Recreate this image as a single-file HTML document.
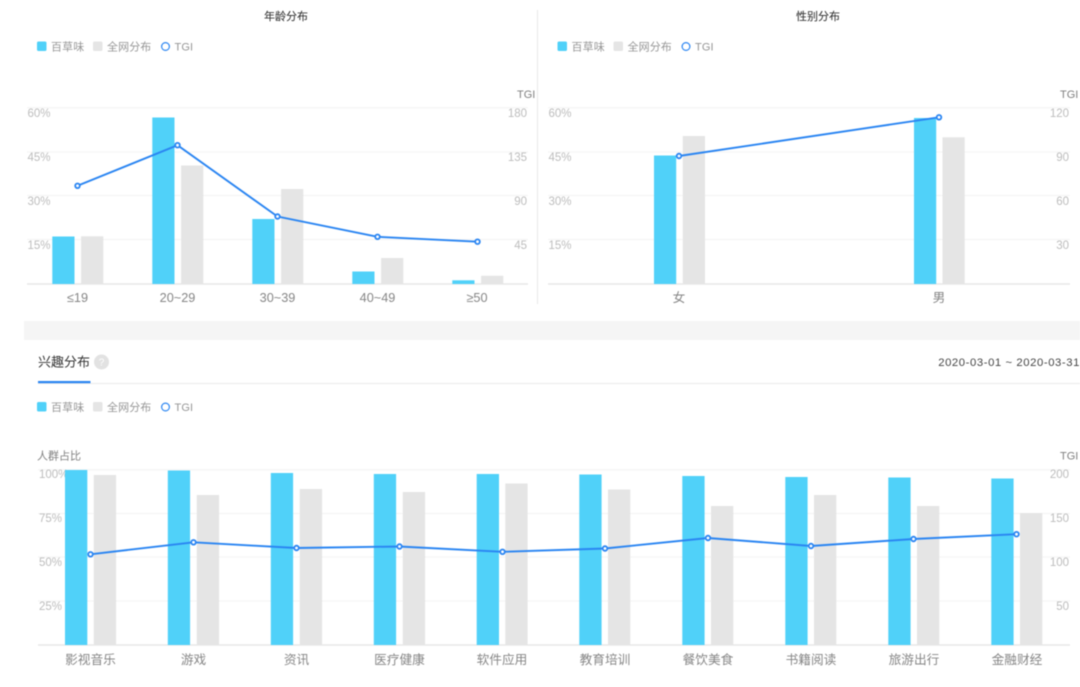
<!DOCTYPE html>
<html lang="zh">
<head>
<meta charset="utf-8">
<title>分布</title>
<style>
html,body{margin:0;padding:0;background:#fff;width:1080px;height:687px;overflow:hidden}
svg{display:block;filter:blur(0.4px)}
text{font-family:"Liberation Sans","Noto Sans CJK SC",sans-serif}
.t{font-size:11px;fill:#333;text-anchor:middle;stroke:#333;stroke-width:.08px}
.l{font-size:11px;fill:#969696;letter-spacing:.1px}
.a{font-size:11.5px;fill:#bdbdbd}
.r{font-size:11.5px;fill:#bdbdbd;text-anchor:end}
.g{font-size:11px;fill:#808080}
.x{font-size:12.7px;fill:#868686;text-anchor:middle}
.gr{stroke:#f3f3f3;stroke-width:1}
.b{stroke:#e4e4e4;stroke-width:1.3}
.bl{fill:#50d1f9}
.gy{fill:#e5e5e5}
.ln{fill:none;stroke:#2a85f2;stroke-width:1.9}
.pt{fill:#fff;stroke:#2a85f2;stroke-width:1.8}
</style>
</head>
<body>
<svg width="1080" height="687" viewBox="0 0 1080 687" xmlns="http://www.w3.org/2000/svg">
<rect width="1080" height="687" fill="#fff"/>

<!-- Age chart -->
<text class="t" x="286" y="20">年龄分布</text>
<rect class="bl" x="37" y="41.500" width="9.500" height="9.500" rx="1.500"/>
<text class="l" x="51" y="50.500">百草味</text>
<rect class="gy" x="93" y="41.500" width="9.500" height="9.500" rx="1.500"/>
<text class="l" x="107" y="50.500">全网分布</text>
<circle cx="165.500" cy="46.500" r="3.900" fill="#fff" stroke="#2a85f2" stroke-width="1.200"/>
<text class="l" x="174.500" y="50.500">TGI</text>
<text class="g" x="517" y="98">TGI</text>
<g class="gr">
<line x1="27" y1="107.800" x2="528" y2="107.800"/><line x1="27" y1="152" x2="528" y2="152"/><line x1="27" y1="195.500" x2="528" y2="195.500"/><line x1="27" y1="239.500" x2="528" y2="239.500"/>
</g>
<line class="b" x1="27" y1="284" x2="528" y2="284"/>
<text class="a" x="27.500" y="117">60%</text><text class="a" x="27.500" y="161">45%</text><text class="a" x="27.500" y="205">30%</text><text class="a" x="27.500" y="249">15%</text>
<text class="r" x="527" y="117">180</text><text class="r" x="527" y="161">135</text><text class="r" x="527" y="205">90</text><text class="r" x="527" y="249">45</text>
<g class="bl">
<rect x="52.300" y="236.500" width="22.200" height="47.500"/><rect x="152.300" y="117.500" width="22.200" height="166.500"/><rect x="252.300" y="219" width="22.200" height="65"/><rect x="352.300" y="271.500" width="22.200" height="12.500"/><rect x="452.300" y="280.300" width="22.200" height="3.700"/>
</g>
<g class="gy">
<rect x="81.100" y="236.300" width="22.200" height="47.700"/><rect x="181.100" y="165.500" width="22.200" height="118.500"/><rect x="281.100" y="189" width="22.200" height="95"/><rect x="381.100" y="258" width="22.200" height="26"/><rect x="481.100" y="275.800" width="22.200" height="8.200"/>
</g>
<polyline class="ln" points="77.500,185.800 177.500,145.200 277.500,216.500 377.500,236.800 477.500,241.700"/>
<g class="pt">
<circle cx="77.500" cy="185.800" r="2.300"/><circle cx="177.500" cy="145.200" r="2.300"/><circle cx="277.500" cy="216.500" r="2.300"/><circle cx="377.500" cy="236.800" r="2.300"/><circle cx="477.500" cy="241.700" r="2.300"/>
</g>
<text class="x" x="77.500" y="302">≤19</text><text class="x" x="177.500" y="302">20~29</text><text class="x" x="277.500" y="302">30~39</text><text class="x" x="377.500" y="302">40~49</text><text class="x" x="477" y="302">≥50</text>

<line x1="537.500" y1="10" x2="537.500" y2="304" stroke="#e8e8e8" stroke-width="1"/>

<!-- Gender chart -->
<text class="t" x="818" y="20">性别分布</text>
<rect class="bl" x="557.500" y="41.500" width="9.500" height="9.500" rx="1.500"/>
<text class="l" x="571.500" y="50.500">百草味</text>
<rect class="gy" x="613.500" y="41.500" width="9.500" height="9.500" rx="1.500"/>
<text class="l" x="627.500" y="50.500">全网分布</text>
<circle cx="686" cy="46.500" r="3.900" fill="#fff" stroke="#2a85f2" stroke-width="1.200"/>
<text class="l" x="695" y="50.500">TGI</text>
<text class="g" x="1060" y="98">TGI</text>
<g class="gr">
<line x1="548" y1="107.800" x2="1070" y2="107.800"/><line x1="548" y1="152" x2="1070" y2="152"/><line x1="548" y1="195.500" x2="1070" y2="195.500"/><line x1="548" y1="239.500" x2="1070" y2="239.500"/>
</g>
<line class="b" x1="548" y1="284" x2="1070" y2="284"/>
<text class="a" x="548.500" y="117">60%</text><text class="a" x="548.500" y="161">45%</text><text class="a" x="548.500" y="205">30%</text><text class="a" x="548.500" y="249">15%</text>
<text class="r" x="1069" y="117">120</text><text class="r" x="1069" y="161">90</text><text class="r" x="1069" y="205">60</text><text class="r" x="1069" y="249">30</text>
<rect class="bl" x="654" y="155.500" width="22.200" height="128.500"/><rect class="bl" x="914" y="118" width="22.200" height="166"/>
<rect class="gy" x="682.800" y="136" width="22.200" height="148"/><rect class="gy" x="942.500" y="137.300" width="22.200" height="146.700"/>
<polyline class="ln" points="679,156 939,117.300"/>
<g class="pt"><circle cx="679" cy="156" r="2.300"/><circle cx="939" cy="117.300" r="2.300"/></g>
<text class="x" x="679" y="302">女</text><text class="x" x="939" y="302">男</text>

<!-- Band -->
<rect x="24" y="321" width="1056" height="19" fill="#f5f5f5"/>

<!-- Interest header -->
<text x="38" y="366.500" font-size="13" fill="#333">兴趣分布</text>
<circle cx="101.500" cy="362" r="7.500" fill="#e2e2e2"/>
<text x="101.500" y="365.500" font-size="10" fill="#fff" text-anchor="middle">?</text>
<line x1="38" y1="383.500" x2="1080" y2="383.500" stroke="#eaeaea" stroke-width="1"/>
<rect x="38" y="381" width="52.500" height="2.200" fill="#2a85f2"/>
<text x="1080" y="366" font-size="11.300" fill="#444" text-anchor="end" letter-spacing=".58">2020-03-01 ~ 2020-03-31</text>

<!-- Interest chart -->
<rect class="bl" x="37" y="402" width="9.500" height="9.500" rx="1.500"/>
<text class="l" x="51" y="411">百草味</text>
<rect class="gy" x="93" y="402" width="9.500" height="9.500" rx="1.500"/>
<text class="l" x="107" y="411">全网分布</text>
<circle cx="165.500" cy="407" r="3.900" fill="#fff" stroke="#2a85f2" stroke-width="1.200"/>
<text class="l" x="174.500" y="411">TGI</text>
<text class="g" x="37" y="459.500">人群占比</text>
<text class="g" x="1060" y="459.500">TGI</text>
<g class="gr">
<line x1="38" y1="469.800" x2="1070" y2="469.800"/><line x1="38" y1="513.500" x2="1070" y2="513.500"/><line x1="38" y1="557" x2="1070" y2="557"/><line x1="38" y1="601" x2="1070" y2="601"/>
</g>
<line class="b" x1="38" y1="645" x2="1070" y2="645"/>
<text class="a" x="39" y="478">100%</text><text class="a" x="39" y="522">75%</text><text class="a" x="39" y="566">50%</text><text class="a" x="39" y="610">25%</text>
<text class="r" x="1069" y="478">200</text><text class="r" x="1069" y="522">150</text><text class="r" x="1069" y="566">100</text><text class="r" x="1069" y="610">50</text>
<g class="bl">
<rect x="65" y="470" width="22.300" height="175"/><rect x="167.800" y="470.500" width="22.300" height="174.500"/><rect x="270.800" y="473" width="22.300" height="172"/><rect x="373.800" y="474" width="22.300" height="171"/><rect x="476.700" y="474" width="22.300" height="171"/><rect x="579.300" y="474.500" width="22.300" height="170.500"/><rect x="682.300" y="476" width="22.300" height="169"/><rect x="785.300" y="477" width="22.300" height="168"/><rect x="888.300" y="477.500" width="22.300" height="167.500"/><rect x="991.300" y="478.500" width="22.300" height="166.500"/>
</g>
<g class="gy">
<rect x="93.800" y="475" width="22.300" height="170"/><rect x="196.800" y="495" width="22.300" height="150"/><rect x="299.800" y="489" width="22.300" height="156"/><rect x="402.800" y="492" width="22.300" height="153"/><rect x="505.300" y="483.500" width="22.300" height="161.500"/><rect x="608" y="489.500" width="22.300" height="155.500"/><rect x="711" y="506" width="22.300" height="139"/><rect x="814" y="495" width="22.300" height="150"/><rect x="917" y="506" width="22.300" height="139"/><rect x="1020" y="513" width="22.300" height="132"/>
</g>
<polyline class="ln" points="90.500,554.300 193.500,542.300 296.500,548 399.500,546.500 502.500,551.800 605,548.500 708,538 811,546 913.500,539 1016.500,534.200"/>
<g class="pt">
<circle cx="90.500" cy="554.300" r="2.300"/><circle cx="193.500" cy="542.300" r="2.300"/><circle cx="296.500" cy="548" r="2.300"/><circle cx="399.500" cy="546.500" r="2.300"/><circle cx="502.500" cy="551.800" r="2.300"/><circle cx="605" cy="548.500" r="2.300"/><circle cx="708" cy="538" r="2.300"/><circle cx="811" cy="546" r="2.300"/><circle cx="913.500" cy="539" r="2.300"/><circle cx="1016.500" cy="534.200" r="2.300"/>
</g>
<text class="x" x="90.500" y="664">影视音乐</text><text class="x" x="193.500" y="664">游戏</text><text class="x" x="296.500" y="664">资讯</text><text class="x" x="399.500" y="664">医疗健康</text><text class="x" x="502" y="664">软件应用</text><text class="x" x="605" y="664">教育培训</text><text class="x" x="708" y="664">餐饮美食</text><text class="x" x="811" y="664">书籍阅读</text><text class="x" x="914" y="664">旅游出行</text><text class="x" x="1017" y="664">金融财经</text>
</svg>
</body>
</html>
